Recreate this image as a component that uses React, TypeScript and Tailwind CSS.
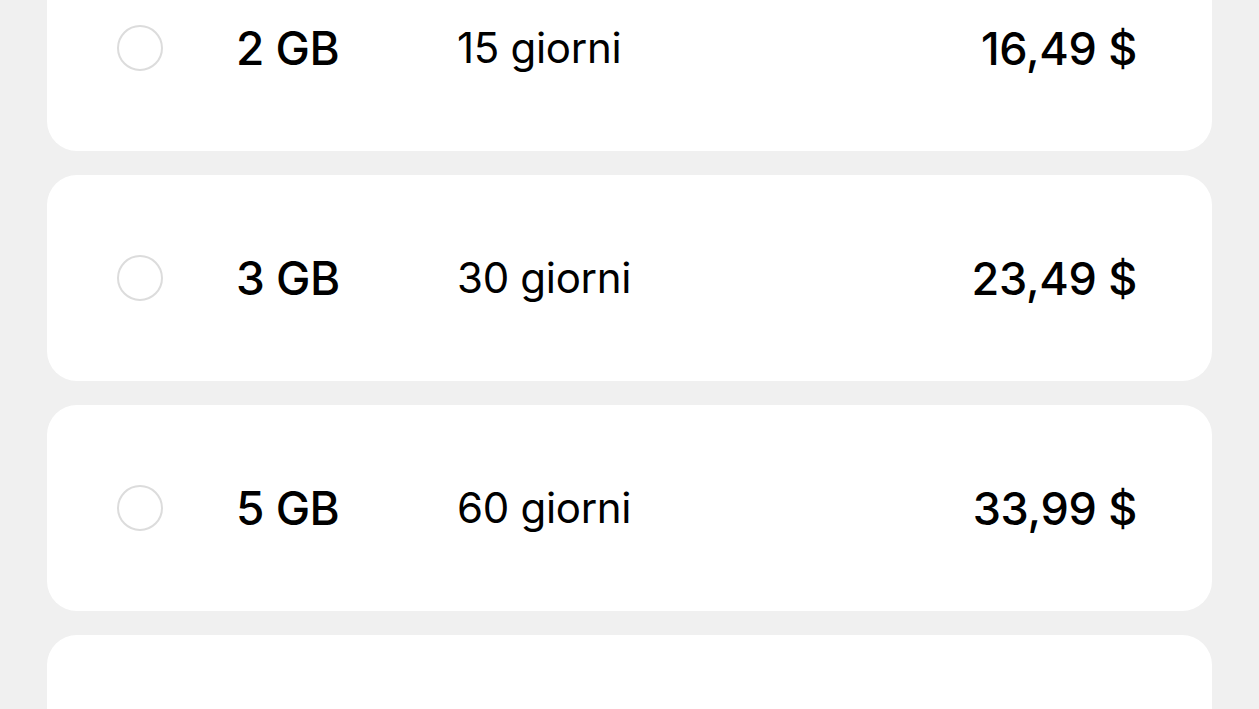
import React from "react";

const plans = [
  { gb: "2 GB", days: "15 giorni", price: "16,49 $" },
  { gb: "3 GB", days: "30 giorni", price: "23,49 $" },
  { gb: "5 GB", days: "60 giorni", price: "33,99 $" },
];

export default function App() {
  return (
    <div
      className="w-[1259px] h-[709px] overflow-hidden bg-[#f0f0f0] px-[47px]"
      style={{ fontFamily: "Inter, 'Noto Sans', sans-serif" }}
    >
      <div className="flex flex-col gap-[24px] -mt-[55px]">
        {plans.map((p) => (
          <div
            key={p.gb}
            className="h-[206px] rounded-[30px] bg-white flex items-center pl-[70px] pr-[75px] text-black"
          >
            <div className="w-[46px] h-[46px] rounded-full border-2 border-[#dcdcdc] shrink-0" />
            <div className="w-[294px] pl-[73px] text-[46px] font-medium tracking-[-0.5px] leading-none shrink-0">
              {p.gb}
            </div>
            <div className="text-[42px] font-normal tracking-[-0.3px] leading-none">{p.days}</div>
            <div className="ml-auto text-[45px] font-medium tracking-[-0.3px] leading-none">{p.price}</div>
          </div>
        ))}
        <div className="h-[206px] rounded-[30px] bg-white" />
      </div>
    </div>
  );
}
